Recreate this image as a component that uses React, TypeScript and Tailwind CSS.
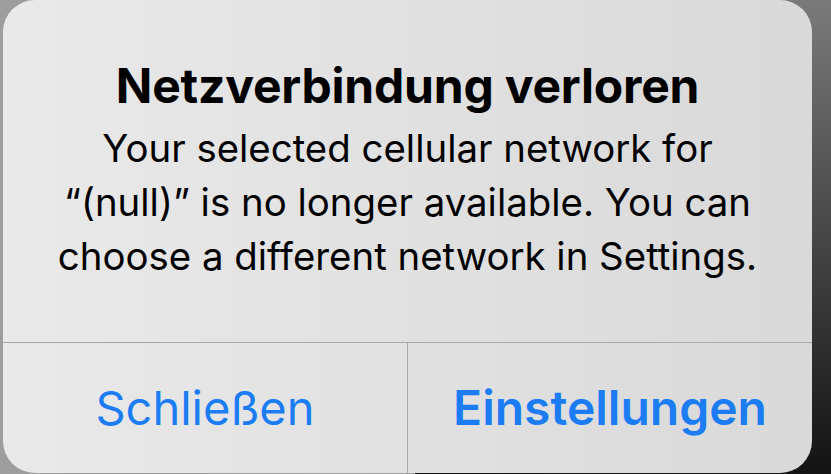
export default function App() {
  return (
    <div
      className="w-[831px] h-[474px] overflow-hidden pl-[3px] pr-[19px] pb-[1px] bg-[linear-gradient(to_right,#9d9d9d_50%,transparent_50%),linear-gradient(to_bottom,#7a7a7a,#131313)]"
      style={{ fontFamily: "Inter, 'Noto Sans', sans-serif" }}
    >
      <div className="h-full rounded-[32px] bg-gradient-to-r from-[#e9e9e9] to-[#d9d9d9] flex flex-col">
        {/* message */}
        <div className="h-[342px] flex flex-col items-center pt-[61px] text-black">
          <h1 className="text-[48px] leading-[50px] font-bold tracking-[-0.2px]">Netzverbindung verloren</h1>
          <p className="mt-[10px] text-[38.4px] leading-[54px] text-center">
            Your selected cellular network for
            <br />
            “(null)” is no longer available. You can
            <br />
            choose a different network in Settings.
          </p>
        </div>
        {/* actions */}
        <div className="flex-1 flex border-t border-[#a9a9a9]">
          <button className="flex-1 flex items-center justify-center text-[47px] text-[#1c7cf4] border-r border-[#a9a9a9]">
            Schließen
          </button>
          <button className="flex-1 flex items-center justify-center text-[48px] font-semibold text-[#1c7cf4]">
            Einstellungen
          </button>
        </div>
      </div>
    </div>
  );
}
